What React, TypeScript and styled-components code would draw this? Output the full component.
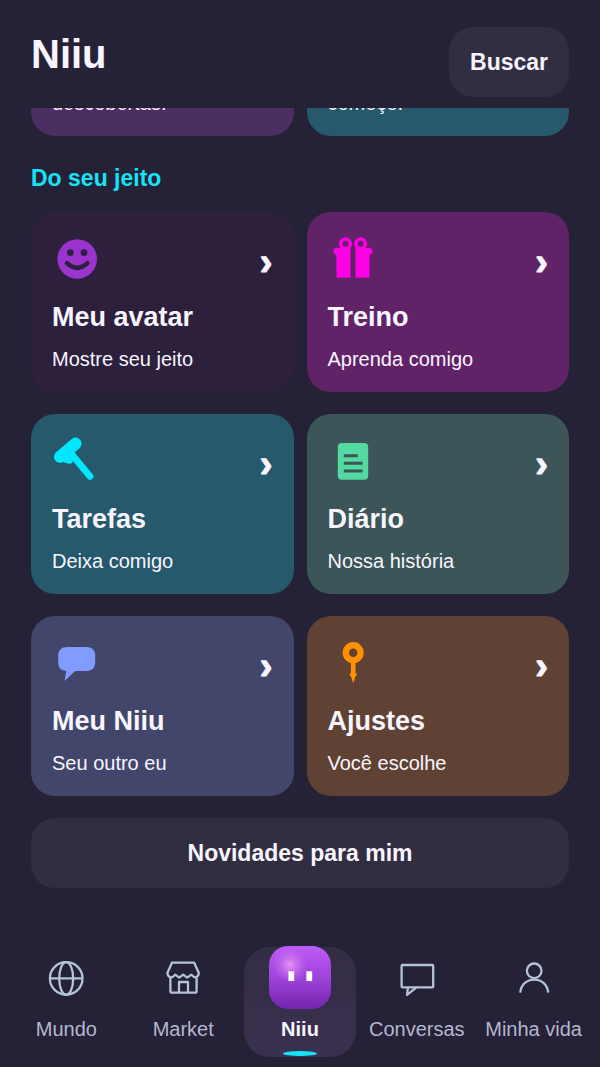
import React from "react";
import styled, { createGlobalStyle } from "styled-components";

const GlobalStyle = createGlobalStyle`
  * { box-sizing: border-box; }
  body {
    margin: 0;
    background: #252136;
    color: #f8f5ff;
    font-family: "Liberation Sans", Arial, sans-serif;
  }
  h1, h2, p { margin: 0; }
  button { font-family: inherit; color: inherit; border: 0; cursor: pointer; }
`;

const Screen = styled.div`
  min-height: 100vh;
  display: flex;
  flex-direction: column;
`;

const Header = styled.header`
  display: flex;
  justify-content: space-between;
  align-items: flex-start;
  padding: 27px 31px 11px;
`;

const Title = styled.h1`
  font-size: 40px;
  line-height: 54px;
  font-weight: 700;
`;

const SoftButton = styled.button<{ $wide?: boolean }>`
  width: ${(p) => (p.$wide ? "100%" : "auto")};
  height: 70px;
  padding: 0 21px;
  border-radius: 24px;
  background: #322e42;
  font-size: 23px;
  line-height: 30px;
  font-weight: 700;
`;

const Content = styled.main`
  flex: 1;
  padding: 0 31px;
`;

const CardGrid = styled.div`
  display: grid;
  grid-template-columns: 1fr 1fr;
  gap: 22px 13px;
  margin-bottom: 22px;
`;

const ScrolledGrid = styled(CardGrid)`
  height: 28px;
  overflow: hidden;
  align-items: end;
  align-content: end;
  margin-bottom: 27px;
`;

const SectionTitle = styled.h2`
  color: #15e4f7;
  font-size: 23px;
  line-height: 30px;
  margin-bottom: 19px;
`;

const Card = styled.button<{ $bg: string }>`
  display: flex;
  flex-direction: column;
  text-align: left;
  padding: 22px 21px 20px;
  border-radius: 24px;
  background: ${(p) => p.$bg};
`;

const CardTop = styled.span`
  display: flex;
  width: 100%;
  height: 50px;
  justify-content: space-between;
  align-items: center;
  margin-bottom: 16px;
`;

const Chevron = styled.span`
  font-size: 38px;
  line-height: 44px;
  font-weight: 700;
  padding-top: 6px;
  -webkit-text-stroke: 1px currentColor;
`;

const CardTitle = styled.span`
  font-size: 27px;
  line-height: 34px;
  font-weight: 700;
  margin-bottom: 12px;
`;

const CardText = styled.span`
  font-size: 20px;
  line-height: 26px;
`;

const TabBar = styled.nav`
  display: grid;
  grid-template-columns: repeat(5, 1fr);
  gap: 4px;
  padding: 0 10px 10px;
`;

const Tab = styled.a<{ $active?: boolean }>`
  position: relative;
  display: flex;
  flex-direction: column;
  align-items: center;
  padding-bottom: 15px;
  border-radius: 26px;
  text-decoration: none;
  white-space: nowrap;
  font-size: 20px;
  line-height: 26px;
  font-weight: ${(p) => (p.$active ? 700 : 400)};
  color: ${(p) => (p.$active ? "#f8f5ff" : "#b4b7d0")};
  background: ${(p) => (p.$active ? "linear-gradient(#332d44, #3a3050)" : "none")};
`;

const TabIcon = styled.span`
  display: flex;
  height: 62px;
  align-items: center;
  margin-bottom: 7px;
`;

const Indicator = styled.span`
  position: absolute;
  left: 50%;
  bottom: 1px;
  width: 34px;
  height: 5px;
  margin-left: -17px;
  border-radius: 50%;
  background: #15e4f7;
`;

const CardSvg = ({ children }: { children: React.ReactNode }) => (
  <svg width="50" height="50" viewBox="0 0 50 50" aria-hidden="true">
    {children}
  </svg>
);

const TabSvg = ({ children }: { children: React.ReactNode }) => (
  <svg
    width="40"
    height="40"
    viewBox="0 0 40 40"
    fill="none"
    stroke="#b4c3d8"
    strokeWidth="2.3"
    strokeLinejoin="round"
    aria-hidden="true"
  >
    {children}
  </svg>
);

const SmileIcon = () => (
  <CardSvg>
    <circle cx="25.2" cy="25" r="19.8" fill="#9b33cf" />
    <circle cx="18.3" cy="18.7" r="3.4" fill="#2d203d" />
    <circle cx="32" cy="18.7" r="3.4" fill="#2d203d" />
    <path d="M15 29.2Q25.2 38.6 35.4 29.2" fill="none" stroke="#2d203d" strokeWidth="4.4" strokeLinecap="round" />
  </CardSvg>
);

const GiftIcon = () => (
  <CardSvg>
    <g fill="#ff00e6">
      <rect x="8.5" y="14" width="14" height="29.7" />
      <rect x="27.5" y="14" width="14" height="29.7" />
      <circle cx="8.9" cy="17.2" r="3.5" />
      <circle cx="41.1" cy="17.2" r="3.5" />
    </g>
    <g fill="#602368" stroke="#ff00e6" strokeWidth="3.6">
      <circle cx="17.5" cy="9.8" r="4.8" />
      <circle cx="32.7" cy="9.8" r="4.8" />
    </g>
  </CardSvg>
);

const HammerIcon = () => (
  <CardSvg>
    <g stroke="#00e8ff" strokeLinecap="round">
      <path d="M8 20.8L23.6 7.6" strokeWidth="12" />
      <path d="M19.4 18L38 40.4" strokeWidth="6.8" />
      <path d="M13 23.4L17.6 24.6" strokeWidth="6.4" />
    </g>
  </CardSvg>
);

const NotesIcon = () => (
  <CardSvg>
    <rect x="9.8" y="7" width="30.4" height="36.8" rx="4" fill="#54d9a2" />
    <path d="M15.8 19.7H29.8M15.8 27.3H34.6M15.8 34.9H34.6" stroke="#3b5558" strokeWidth="3" />
  </CardSvg>
);

const BubbleIcon = () => (
  <CardSvg>
    <path
      d="M15.2 9H34.2Q43.2 9 43.2 17.5V24.5Q43.2 33 34.2 33H23.2L12.5 43L14.3 33Q6.2 32.5 6.2 24.5V17.5Q6.2 9 15.2 9Z"
      fill="#819bff"
    />
  </CardSvg>
);

const KeyIcon = () => (
  <CardSvg>
    <circle cx="25.2" cy="14.7" r="7.4" fill="none" stroke="#ff9100" strokeWidth="6.4" />
    <path d="M22.9 23H27.5V35.3H28.6V38H27.6L25.2 45.3L22.8 38H21.8V35.3H22.9Z" fill="#ff9100" />
  </CardSvg>
);

const GlobeIcon = () => (
  <TabSvg>
    <circle cx="20.2" cy="20.4" r="16.3" />
    <ellipse cx="20.2" cy="20.4" rx="7" ry="16.3" />
    <path d="M3.8 20.4H36.6" />
  </TabSvg>
);

const MarketIcon = () => (
  <TabSvg>
    <path d="M8.9 4.7H31.2L35.8 15Q35.6 18.6 32.7 19.4Q30.4 19.2 28.4 16.6L24.2 19.6L20.2 16.6L16.2 19.6L12.2 16.6Q10.2 19.2 7.6 19.4Q4.6 18.6 4.4 15Z" />
    <path d="M7.4 19.4V33.4Q7.4 34.6 8.6 34.6H32.4Q33.6 34.6 33.6 33.4V19.4M16 34.6V24H25V34.6" />
  </TabSvg>
);

const ChatIcon = () => (
  <TabSvg>
    <rect x="4.6" y="7" width="31.6" height="22.4" rx="1" />
    <path d="M11 29.6L10 36.8L19.2 29.6" />
  </TabSvg>
);

const PersonIcon = () => (
  <TabSvg>
    <circle cx="20.2" cy="12.8" r="7.3" />
    <path d="M6.2 34.6C7 26.6 12.6 21.6 20.2 21.6S33.4 26.6 34.2 34.6" />
  </TabSvg>
);

const FaceIcon = () => (
  <svg width="64" height="64" viewBox="0 0 64 64" aria-hidden="true">
    <defs>
      <linearGradient id="face" x1="0" y1="0" x2="0" y2="1">
        <stop offset="0" stopColor="#bd5cf6" />
        <stop offset="0.5" stopColor="#9f43da" />
        <stop offset="1" stopColor="#7425ae" />
      </linearGradient>
      <radialGradient id="shine" cx="0.34" cy="0.3" r="0.28">
        <stop offset="0" stopColor="#f0a0f8" stopOpacity="0.85" />
        <stop offset="1" stopColor="#d070f0" stopOpacity="0" />
      </radialGradient>
    </defs>
    <rect x="1" y="0" width="62" height="63" rx="19" fill="url(#face)" />
    <rect x="1" y="0" width="62" height="63" rx="19" fill="url(#shine)" />
    <path d="M20.4 25.3h5.8v9.8h-5.8zM38.4 25.3h5.8v9.8h-5.8z" fill="#fff" />
  </svg>
);

interface CardData {
  title: string;
  text: string;
  bg: string;
  icon: React.ReactNode;
}

const cards: CardData[] = [
  { title: "Meu avatar", text: "Mostre seu jeito", bg: "#2d203d", icon: <SmileIcon /> },
  { title: "Treino", text: "Aprenda comigo", bg: "#602368", icon: <GiftIcon /> },
  { title: "Tarefas", text: "Deixa comigo", bg: "#25596b", icon: <HammerIcon /> },
  { title: "Diário", text: "Nossa história", bg: "#3b5558", icon: <NotesIcon /> },
  { title: "Meu Niiu", text: "Seu outro eu", bg: "#43466b", icon: <BubbleIcon /> },
  { title: "Ajustes", text: "Você escolhe", bg: "#5f4233", icon: <KeyIcon /> },
];

const tabs = [
  { label: "Mundo", icon: <GlobeIcon /> },
  { label: "Market", icon: <MarketIcon /> },
  { label: "Niiu", icon: <FaceIcon />, active: true },
  { label: "Conversas", icon: <ChatIcon /> },
  { label: "Minha vida", icon: <PersonIcon /> },
];

export default function App() {
  return (
    <>
      <GlobalStyle />
      <Screen>
        <Header>
          <Title>Niiu</Title>
          <SoftButton type="button">Buscar</SoftButton>
        </Header>
        <Content>
          <ScrolledGrid>
            <Card type="button" $bg="#4b2e62">
              <CardText>descobertas.</CardText>
            </Card>
            <Card type="button" $bg="#25596b">
              <CardText>começo.</CardText>
            </Card>
          </ScrolledGrid>
          <SectionTitle>Do seu jeito</SectionTitle>
          <CardGrid>
            {cards.map((card) => (
              <Card key={card.title} type="button" $bg={card.bg}>
                <CardTop>
                  {card.icon}
                  <Chevron aria-hidden="true">›</Chevron>
                </CardTop>
                <CardTitle>{card.title}</CardTitle>
                <CardText>{card.text}</CardText>
              </Card>
            ))}
          </CardGrid>
          <SoftButton type="button" $wide>
            Novidades para mim
          </SoftButton>
        </Content>
        <TabBar>
          {tabs.map((tab) => (
            <Tab key={tab.label} href="#" $active={tab.active} aria-current={tab.active ? "page" : undefined}>
              <TabIcon>{tab.icon}</TabIcon>
              {tab.label}
              {tab.active && <Indicator />}
            </Tab>
          ))}
        </TabBar>
      </Screen>
    </>
  );
}
